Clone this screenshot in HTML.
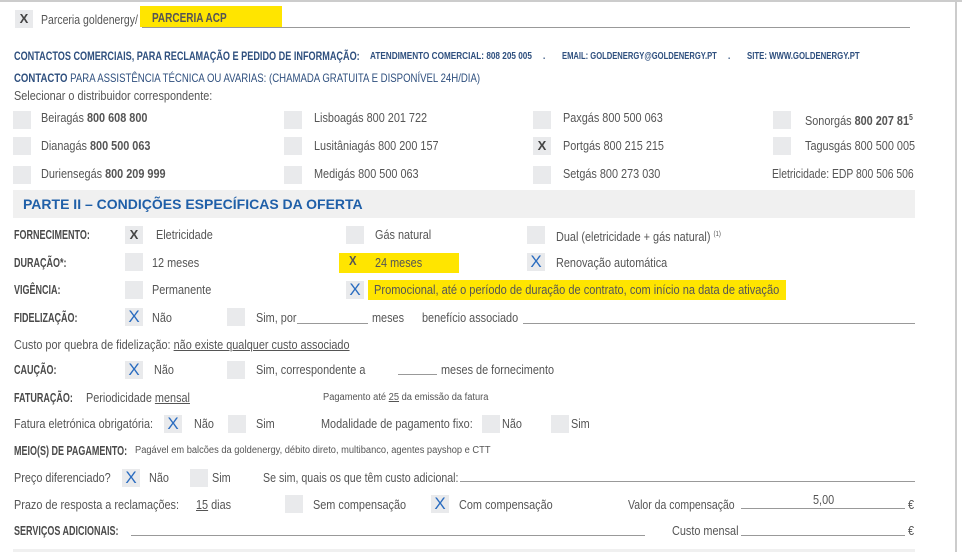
<!DOCTYPE html>
<html><head><meta charset="utf-8"><style>
body{margin:0;width:962px;height:552px;position:relative;overflow:hidden;background:#fff;font-family:"Liberation Sans",sans-serif;}
.t{position:absolute;white-space:nowrap;font-size:12.5px;line-height:14px;color:#555;transform:scaleX(0.87);transform-origin:0 50%;}
.b{font-weight:bold;}
.l{position:absolute;white-space:nowrap;font-size:12.5px;line-height:14px;color:#4a4a4a;font-weight:bold;transform:scaleX(0.72);transform-origin:0 50%;}
.h{position:absolute;white-space:nowrap;font-size:12px;line-height:14px;color:#2e4f7e;font-weight:bold;transform:scaleX(0.76);transform-origin:0 50%;}
.s{position:absolute;white-space:nowrap;font-size:10px;line-height:12px;color:#555;transform:scaleX(0.93);transform-origin:0 50%;}
.sh{position:absolute;white-space:nowrap;font-size:10px;line-height:12px;color:#2e4f7e;font-weight:bold;transform:scaleX(0.82);transform-origin:0 50%;}
.bx{position:absolute;width:18px;height:18px;background:#e9eaec;text-align:center;line-height:18px;font-size:13px;}
.xb{color:#2a6cc0;font-size:17px;font-family:"Liberation Sans",sans-serif;}
.xd{color:#444;font-weight:bold;font-size:13px;}
.ln{position:absolute;height:1px;background:#999;}
.y{position:absolute;background:#ffe500;}
u{text-decoration:underline;}
</style></head><body>
<div style="position:absolute;left:0;top:0;width:962px;height:2px;background:#ccc"></div>
<div style="position:absolute;left:955px;top:0;width:2px;height:552px;background:#ccc"></div>

<div class="bx xd" style="left:15px;top:10px">X</div>
<span class="t" style="left:41px;top:13px;transform:scaleX(0.84)">Parceria goldenergy/</span>
<div class="y" style="left:140px;top:6px;width:142px;height:21px"></div>
<span class="l" style="left:152px;top:11px;color:#555;transform:scaleX(0.8)">PARCERIA ACP</span>
<div class="ln" style="left:142px;top:27px;width:768px"></div>

<span class="h" style="left:14px;top:49px">CONTACTOS COMERCIAIS, PARA RECLAMAÇÃO E PEDIDO DE INFORMAÇÃO:</span>
<span class="sh" style="left:370px;top:51px">ATENDIMENTO COMERCIAL: 808 205 005</span>
<span class="sh" style="left:543px;top:51px">.</span>
<span class="sh" style="left:562px;top:51px;transform:scaleX(0.76)">EMAIL: GOLDENERGY@GOLDENERGY.PT</span>
<span class="sh" style="left:728px;top:51px">.</span>
<span class="sh" style="left:747px;top:51px;transform:scaleX(0.78)">SITE: WWW.GOLDENERGY.PT</span>
<span class="h" style="left:14px;top:71px;font-weight:normal;transform:scaleX(0.8)"><b>CONTACTO</b> PARA ASSISTÊNCIA TÉCNICA OU AVARIAS: (CHAMADA GRATUITA E DISPONÍVEL 24H/DIA)</span>
<span class="t" style="left:14px;top:89px">Selecionar o distribuidor correspondente:</span>

<div class="bx" style="left:13px;top:111px"></div><span class="t" style="left:41px;top:111px">Beiragás <b>800 608 800</b></span>
<div class="bx" style="left:284px;top:111px"></div><span class="t" style="left:314px;top:111px">Lisboagás 800 201 722</span>
<div class="bx" style="left:533px;top:111px"></div><span class="t" style="left:563px;top:111px">Paxgás 800 500 063</span>
<div class="bx" style="left:773px;top:111px"></div><span class="t" style="left:805px;top:111px">Sonorgás <b>800 207 81<sup style="font-size:8px">5</sup></b></span>

<div class="bx" style="left:13px;top:137px"></div><span class="t" style="left:41px;top:139px">Dianagás <b>800 500 063</b></span>
<div class="bx" style="left:284px;top:137px"></div><span class="t" style="left:314px;top:139px">Lusitâniagás 800 200 157</span>
<div class="bx xd" style="left:533px;top:137px">X</div><span class="t" style="left:563px;top:139px">Portgás 800 215 215</span>
<div class="bx" style="left:773px;top:137px"></div><span class="t" style="left:805px;top:139px">Tagusgás 800 500 005</span>

<div class="bx" style="left:13px;top:166px"></div><span class="t" style="left:41px;top:167px">Duriensegás <b>800 209 999</b></span>
<div class="bx" style="left:284px;top:166px"></div><span class="t" style="left:314px;top:167px">Medigás 800 500 063</span>
<div class="bx" style="left:533px;top:166px"></div><span class="t" style="left:563px;top:167px">Setgás 800 273 030</span>
<span class="t" style="left:772px;top:167px;transform:scaleX(0.83)">Eletricidade: EDP 800 506 506</span>

<div style="position:absolute;left:13px;top:190px;width:902px;height:28px;background:#f0f0f0"></div>
<span style="position:absolute;left:23px;top:196px;font-size:14px;line-height:16px;font-weight:bold;color:#1f5fa8;white-space:nowrap">PARTE II – CONDIÇÕES ESPECÍFICAS DA OFERTA</span>

<span class="l" style="left:14px;top:228px">FORNECIMENTO:</span>
<div class="bx xd" style="left:125px;top:226px">X</div><span class="t" style="left:156px;top:228px">Eletricidade</span>
<div class="bx" style="left:346px;top:226px"></div><span class="t" style="left:375px;top:228px">Gás natural</span>
<div class="bx" style="left:527px;top:226px"></div><span class="t" style="left:556px;top:228px">Dual (eletricidade + gás natural) <sup style="font-size:7px">(1)</sup></span>

<span class="l" style="left:14px;top:256px">DURAÇÃO*:</span>
<div class="bx" style="left:125px;top:253px"></div><span class="t" style="left:152px;top:256px">12 meses</span>
<div class="y" style="left:339px;top:253px;width:120px;height:20px"></div>
<span class="t xd" style="left:349px;top:254px;color:#555">X</span><span class="t" style="left:375px;top:256px">24 meses</span>
<div class="bx xb" style="left:527px;top:253px">X</div><span class="t" style="left:556px;top:256px">Renovação automática</span>

<span class="l" style="left:14px;top:283px">VIGÊNCIA:</span>
<div class="bx" style="left:125px;top:281px"></div><span class="t" style="left:152px;top:283px">Permanente</span>
<div class="bx xb" style="left:346px;top:281px">X</div>
<div class="y" style="left:368px;top:280px;width:418px;height:20px"></div>
<span class="t" style="left:374px;top:283px;transform:scaleX(0.885)">Promocional, até o período de duração de contrato, com início na data de ativação</span>

<span class="l" style="left:14px;top:311px">FIDELIZAÇÃO:</span>
<div class="bx xb" style="left:125px;top:308px">X</div><span class="t" style="left:152px;top:311px">Não</span>
<div class="bx" style="left:227px;top:308px"></div><span class="t" style="left:256px;top:311px">Sim, por</span>
<div class="ln" style="left:297px;top:323px;width:71px"></div>
<span class="t" style="left:372px;top:311px">meses</span>
<span class="t" style="left:422px;top:311px">benefício associado</span>
<div class="ln" style="left:523px;top:323px;width:392px"></div>

<span class="t" style="left:14px;top:338px">Custo por quebra de fidelização: <u>não existe qualquer custo associado</u></span>

<span class="l" style="left:14px;top:363px">CAUÇÃO:</span>
<div class="bx xb" style="left:125px;top:361px">X</div><span class="t" style="left:154px;top:363px">Não</span>
<div class="bx" style="left:227px;top:361px"></div><span class="t" style="left:256px;top:363px">Sim, correspondente a</span>
<div class="ln" style="left:398px;top:374px;width:39px"></div>
<span class="t" style="left:441px;top:363px">meses de fornecimento</span>

<span class="l" style="left:14px;top:391px">FATURAÇÃO:</span>
<span class="t" style="left:86px;top:391px">Periodicidade <u>mensal</u></span>
<span class="s" style="left:323px;top:392px">Pagamento até <u>25</u> da emissão da fatura</span>

<span class="t" style="left:14px;top:417px">Fatura eletrónica obrigatória:</span>
<div class="bx xb" style="left:164px;top:415px">X</div><span class="t" style="left:194px;top:417px">Não</span>
<div class="bx" style="left:228px;top:415px"></div><span class="t" style="left:256px;top:417px">Sim</span>
<span class="t" style="left:321px;top:417px">Modalidade de pagamento fixo:</span>
<div class="bx" style="left:482px;top:415px"></div><span class="t" style="left:502px;top:417px">Não</span>
<div class="bx" style="left:551px;top:415px"></div><span class="t" style="left:571px;top:417px">Sim</span>

<span class="l" style="left:14px;top:444px">MEIO(S) DE PAGAMENTO:</span>
<span class="s" style="left:135px;top:445px">Pagável em balcões da goldenergy, débito direto, multibanco, agentes payshop e CTT</span>

<span class="t" style="left:14px;top:471px">Preço diferenciado?</span>
<div class="bx xb" style="left:122px;top:469px">X</div><span class="t" style="left:149px;top:471px">Não</span>
<div class="bx" style="left:190px;top:469px"></div><span class="t" style="left:212px;top:471px">Sim</span>
<span class="t" style="left:263px;top:471px;transform:scaleX(0.85)">Se sim, quais os que têm custo adicional:</span>
<div class="ln" style="left:460px;top:481px;width:455px"></div>

<span class="t" style="left:14px;top:498px">Prazo de resposta a reclamações:</span>
<span class="t" style="left:196px;top:498px"><u>15</u> dias</span>
<div class="bx" style="left:285px;top:495px"></div><span class="t" style="left:313px;top:498px">Sem compensação</span>
<div class="bx xb" style="left:431px;top:495px">X</div><span class="t" style="left:459px;top:498px">Com compensação</span>
<span class="t" style="left:628px;top:498px;transform:scaleX(0.84)">Valor da compensação</span>
<div class="ln" style="left:741px;top:508px;width:164px"></div>
<span class="t" style="left:813px;top:493px">5,00</span>
<span class="t" style="left:908px;top:498px">€</span>

<span class="l" style="left:14px;top:524px">SERVIÇOS ADICIONAIS:</span>
<div class="ln" style="left:131px;top:535px;width:514px"></div>
<span class="t" style="left:672px;top:524px">Custo mensal</span>
<div class="ln" style="left:741px;top:535px;width:164px"></div>
<span class="t" style="left:908px;top:524px">€</span>

<div style="position:absolute;left:13px;top:549px;width:902px;height:3px;background:#f0f0f0"></div>
</body></html>
